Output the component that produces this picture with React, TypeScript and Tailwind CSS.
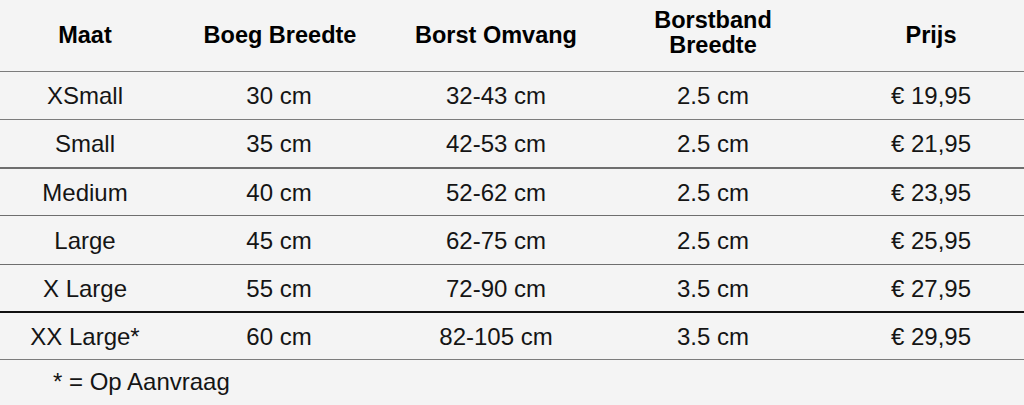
import React from "react";

const rows: { cells: string[]; h: string; border: string }[] = [
  { cells: ["XSmall", "30 cm", "32-43 cm", "2.5 cm", "€ 19,95"], h: "h-[48px]", border: "border-b border-[#7c7c7c]" },
  { cells: ["Small", "35 cm", "42-53 cm", "2.5 cm", "€ 21,95"], h: "h-[49px]", border: "border-b-2 border-[#6e6e6e]" },
  { cells: ["Medium", "40 cm", "52-62 cm", "2.5 cm", "€ 23,95"], h: "h-[47px]", border: "border-b border-[#6e6e6e]" },
  { cells: ["Large", "45 cm", "62-75 cm", "2.5 cm", "€ 25,95"], h: "h-[49px]", border: "border-b border-[#6e6e6e]" },
  { cells: ["X Large", "55 cm", "72-90 cm", "3.5 cm", "€ 27,95"], h: "h-[48px]", border: "border-b-2 border-[#111111]" },
  { cells: ["XX Large*", "60 cm", "82-105 cm", "3.5 cm", "€ 29,95"], h: "h-[47px]", border: "border-b border-[#7c7c7c]" },
];

const grid = "grid grid-cols-[170px_218px_216px_218px_202px] items-center";

export default function App() {
  return (
    <div
      className="w-[1024px] h-[405px] bg-[#f4f4f4] text-[#151515] overflow-hidden"
      style={{ fontFamily: '"Liberation Sans", Arial, sans-serif' }}
    >
      <div className={`${grid} h-[72px] border-b border-[#7c7c7c] font-bold text-[23.5px] text-black leading-[25px]`}>
        <div className="text-center">Maat</div>
        <div className="text-center pl-[2px]">Boeg Breedte</div>
        <div className="text-center">Borst Omvang</div>
        <div className="text-center pb-[6px]">
          Borstband
          <br />
          Breedte
        </div>
        <div className="text-center pl-[16px]">Prijs</div>
      </div>
      {rows.map((r, i) => (
        <div key={i} className={`${grid} ${r.h} ${r.border} text-[24px] leading-none`}>
          {r.cells.map((c, j) => (
            <div key={j} className={`text-center pt-[1px] ${j === 4 ? "pl-[16px]" : ""}`}>
              {c}
            </div>
          ))}
        </div>
      ))}
      <div className="h-[44px] flex items-center pl-[53px] text-[24px] leading-none">* = Op Aanvraag</div>
    </div>
  );
}
